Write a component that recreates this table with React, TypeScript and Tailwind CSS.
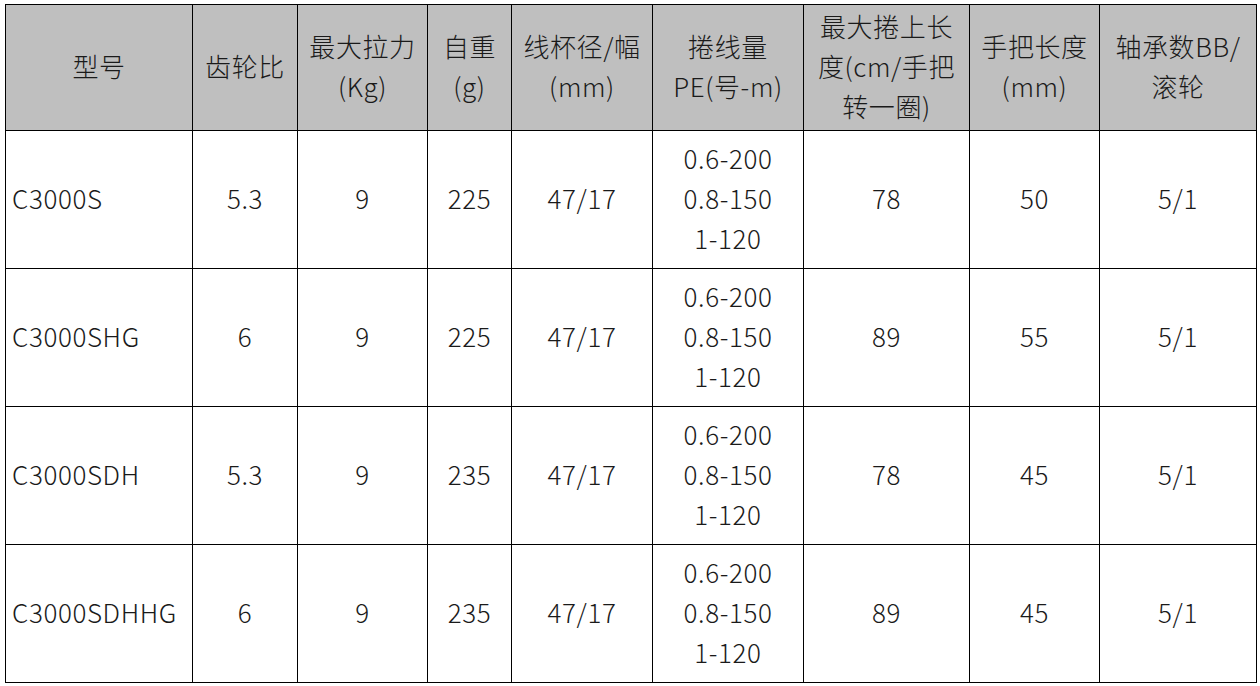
import React from "react";

const cols = "grid-cols-[186px_104px_129px_83px_140px_150px_165px_129px_156px]";

const header: React.ReactNode[] = [
  <>型号</>,
  <>齿轮比</>,
  <>最大拉力<br />(Kg)</>,
  <>自重<br />(g)</>,
  <>线杯径/幅<br />(mm)</>,
  <>捲线量<br />PE(号-m)</>,
  <>最大捲上长<br />度(cm/手把<br />转一圈)</>,
  <>手把长度<br />(mm)</>,
  <>轴承数BB/<br />滚轮</>,
];

const rows = [
  ["C3000S", "5.3", "9", "225", "47/17", "pe", "78", "50", "5/1"],
  ["C3000SHG", "6", "9", "225", "47/17", "pe", "89", "55", "5/1"],
  ["C3000SDH", "5.3", "9", "235", "47/17", "pe", "78", "45", "5/1"],
  ["C3000SDHHG", "6", "9", "235", "47/17", "pe", "89", "45", "5/1"],
];

export default function App() {
  return (
    <div
      className="w-[1260px] h-[686px] bg-white pt-[4px] pl-[5px] text-[#1a1a1a] text-[26px] leading-[40px] font-light tracking-[0.6px]"
      style={{ fontFamily: '"Noto Sans CJK SC", "Noto Sans", sans-serif' }}
    >
      <div className={`grid ${cols} grid-rows-[125px_137px_137px_137px_137px] gap-px p-px bg-black w-[1252px]`}>
        {header.map((h, i) => (
          <div key={i} className="bg-[#bfbfbf] flex items-center justify-center text-center">
            <div className="-mt-[3px] whitespace-nowrap">{h}</div>
          </div>
        ))}
        {rows.map((r, ri) =>
          r.map((c, ci) => (
            <div
              key={`${ri}-${ci}`}
              className={`bg-white flex items-center ${ci === 0 ? "justify-start pl-[6px]" : "justify-center text-center"}`}
            >
              {c === "pe" ? (
                <div className="-mt-[3px]">
                  0.6-200
                  <br />
                  0.8-150
                  <br />
                  1-120
                </div>
              ) : (
                <div className="-mt-[3px]">{c}</div>
              )}
            </div>
          ))
        )}
      </div>
    </div>
  );
}
